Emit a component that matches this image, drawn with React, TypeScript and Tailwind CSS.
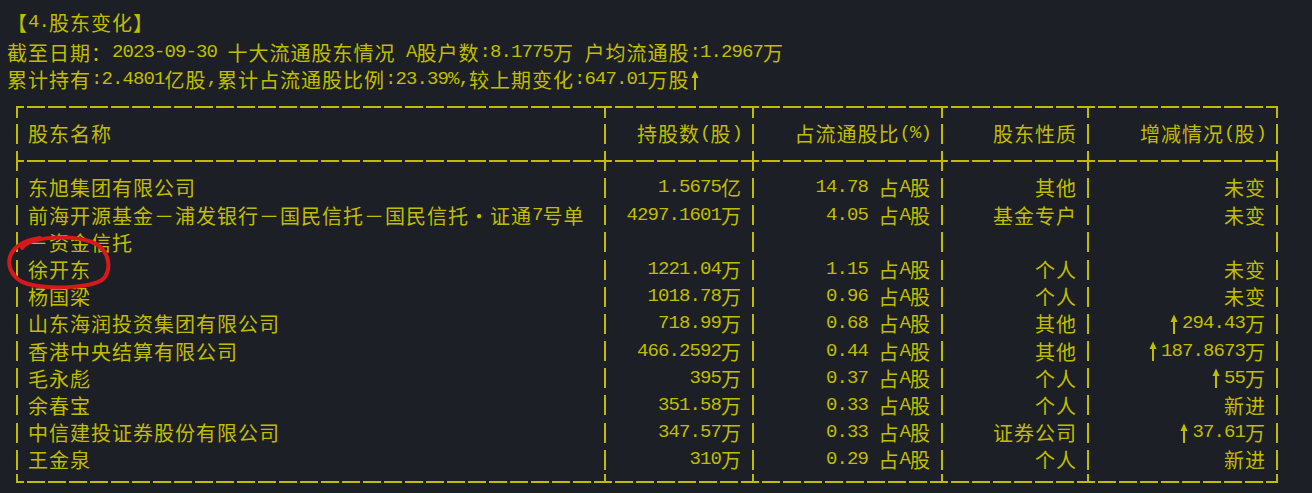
import React from "react";

const ASC = "font-['Liberation_Mono',monospace] text-[19px] tracking-[-0.9px]";
const CJK = "font-['Noto_Sans_CJK_SC',sans-serif] text-[20px] tracking-[1px]";

function Arrow() {
  return (
    <svg width="13" height="20" viewBox="0 0 13 20" className="inline-block align-[-3px]">
      <polygon points="5,0.5 8.5,8 1.5,8" fill="#c0bd00" />
      <rect x="4" y="6" width="2" height="14" fill="#c0bd00" />
    </svg>
  );
}

function Txt({ s }: { s: string }) {
  const parts = s.split(/(↑|[\x20-\x7e]+)/).filter(Boolean);
  return (
    <>
      {parts.map((p, i) =>
        p === "↑" ? (
          <Arrow key={i} />
        ) : /^[\x20-\x7e]+$/.test(p) ? (
          <span key={i} className={ASC}>
            {p}
          </span>
        ) : (
          <span key={i} className={CJK}>
            {p}
          </span>
        )
      )}
    </>
  );
}

const DASH =
  "bg-[repeating-linear-gradient(to_right,#c0bd00_0px,#c0bd00_8px,transparent_8px,transparent_11px,#c0bd00_11px,#c0bd00_21px)]";

function Sep({ kind }: { kind: "top" | "mid" | "bottom" | "row" }) {
  const stub =
    kind === "top"
      ? "mt-[13px] h-[12px]"
      : kind === "bottom"
      ? "mt-[1px] h-[9px]"
      : "mt-[3.6px] h-[20px]";
  return (
    <div className="w-[2px] shrink-0 flex flex-col">
      <div className={`w-[2px] bg-[#c0bd00] ${stub}`} />
    </div>
  );
}

function BorderRow({ kind }: { kind: "top" | "mid" | "bottom" }) {
  const lineCls = kind === "bottom" ? "self-start mt-[8px]" : "self-center";
  const h = kind === "top" ? "h-[27px]" : "h-[27.2px]";
  return (
    <div className={`grid w-[1262px] ${h}`}>
      <div className={`col-start-1 row-start-1 h-[2px] w-full ${DASH} ${lineCls}`} />
      <div className="col-start-1 row-start-1 flex">
        <Sep kind={kind} />
        <div className="w-[586px] shrink-0" />
        <Sep kind={kind} />
        <div className="w-[146px] shrink-0" />
        <Sep kind={kind} />
        <div className="w-[187px] shrink-0" />
        <Sep kind={kind} />
        <div className="w-[144px] shrink-0" />
        <Sep kind={kind} />
        <div className="w-[187px] shrink-0" />
        <Sep kind={kind} />
      </div>
    </div>
  );
}

function Row({ c }: { c: string[] }) {
  const cell = "shrink-0 flex items-center whitespace-pre leading-[27px]";
  return (
    <div className="flex w-[1262px] h-[27.2px]">
      <Sep kind="row" />
      <div className={`${cell} w-[586px] pl-[10px]`}>
        <Txt s={c[0]} />
      </div>
      <Sep kind="row" />
      <div className={`${cell} w-[146px] justify-end pr-[10px]`}>
        <Txt s={c[1]} />
      </div>
      <Sep kind="row" />
      <div className={`${cell} w-[187px] justify-end pr-[10px]`}>
        <Txt s={c[2]} />
      </div>
      <Sep kind="row" />
      <div className={`${cell} w-[144px] justify-end pr-[10px]`}>
        <Txt s={c[3]} />
      </div>
      <Sep kind="row" />
      <div className={`${cell} w-[187px] justify-end pr-[10px]`}>
        <Txt s={c[4]} />
      </div>
      <Sep kind="row" />
    </div>
  );
}

const rows: string[][] = [
  ["东旭集团有限公司", "1.5675亿", "14.78 占A股", "其他", "未变"],
  ["前海开源基金－浦发银行－国民信托－国民信托·证通7号单", "4297.1601万", "4.05 占A股", "基金专户", "未变"],
  ["－资金信托", "", "", "", ""],
  ["徐开东", "1221.04万", "1.15 占A股", "个人", "未变"],
  ["杨国梁", "1018.78万", "0.96 占A股", "个人", "未变"],
  ["山东海润投资集团有限公司", "718.99万", "0.68 占A股", "其他", "↑294.43万"],
  ["香港中央结算有限公司", "466.2592万", "0.44 占A股", "其他", "↑187.8673万"],
  ["毛永彪", "395万", "0.37 占A股", "个人", "↑55万"],
  ["余春宝", "351.58万", "0.33 占A股", "个人", "新进"],
  ["中信建投证券股份有限公司", "347.57万", "0.33 占A股", "证券公司", "↑37.61万"],
  ["王金泉", "310万", "0.29 占A股", "个人", "新进"],
];

export default function App() {
  const line = "flex items-center whitespace-pre leading-[27px] pl-[7px]";
  return (
    <div className="relative w-[1312px] h-[493px] bg-[#1d1f27] text-[#c0bd00] overflow-hidden font-['Noto_Sans_CJK_SC',sans-serif]">
      <div className="flex flex-col pt-[8px]">
        <div className={`${line} h-[28px]`}>
          <Txt s="【4.股东变化】" />
        </div>
        <div className={`${line} h-[28px] mt-[2px]`}>
          <Txt s="截至日期：2023-09-30 十大流通股东情况 A股户数:8.1775万 户均流通股:1.2967万" />
        </div>
        <div className={`${line} h-[27px]`}>
          <Txt s="累计持有:2.4801亿股,累计占流通股比例:23.39%,较上期变化:647.01万股↑" />
        </div>
        <div className="flex flex-col pl-[16px]">
          <BorderRow kind="top" />
          <Row c={["股东名称", "持股数(股)", "占流通股比(%)", "股东性质", "增减情况(股)"]} />
          <BorderRow kind="mid" />
          {rows.map((r, i) => (
            <Row key={i} c={r} />
          ))}
          <BorderRow kind="bottom" />
        </div>
      </div>
      <svg
        className="absolute left-0 top-[225px]"
        width="130"
        height="75"
        viewBox="0 225 130 75"
      >
        <path
          d="M22 248 C30 237 70 234 92 242 C108 248 112 266 105 277 C97 288 52 290 28 284 C10 279 5 262 13 251 C18 244 27 240 40 238"
          fill="none"
          stroke="#d8191c"
          strokeWidth="4"
          strokeLinecap="round"
        />
      </svg>
    </div>
  );
}
